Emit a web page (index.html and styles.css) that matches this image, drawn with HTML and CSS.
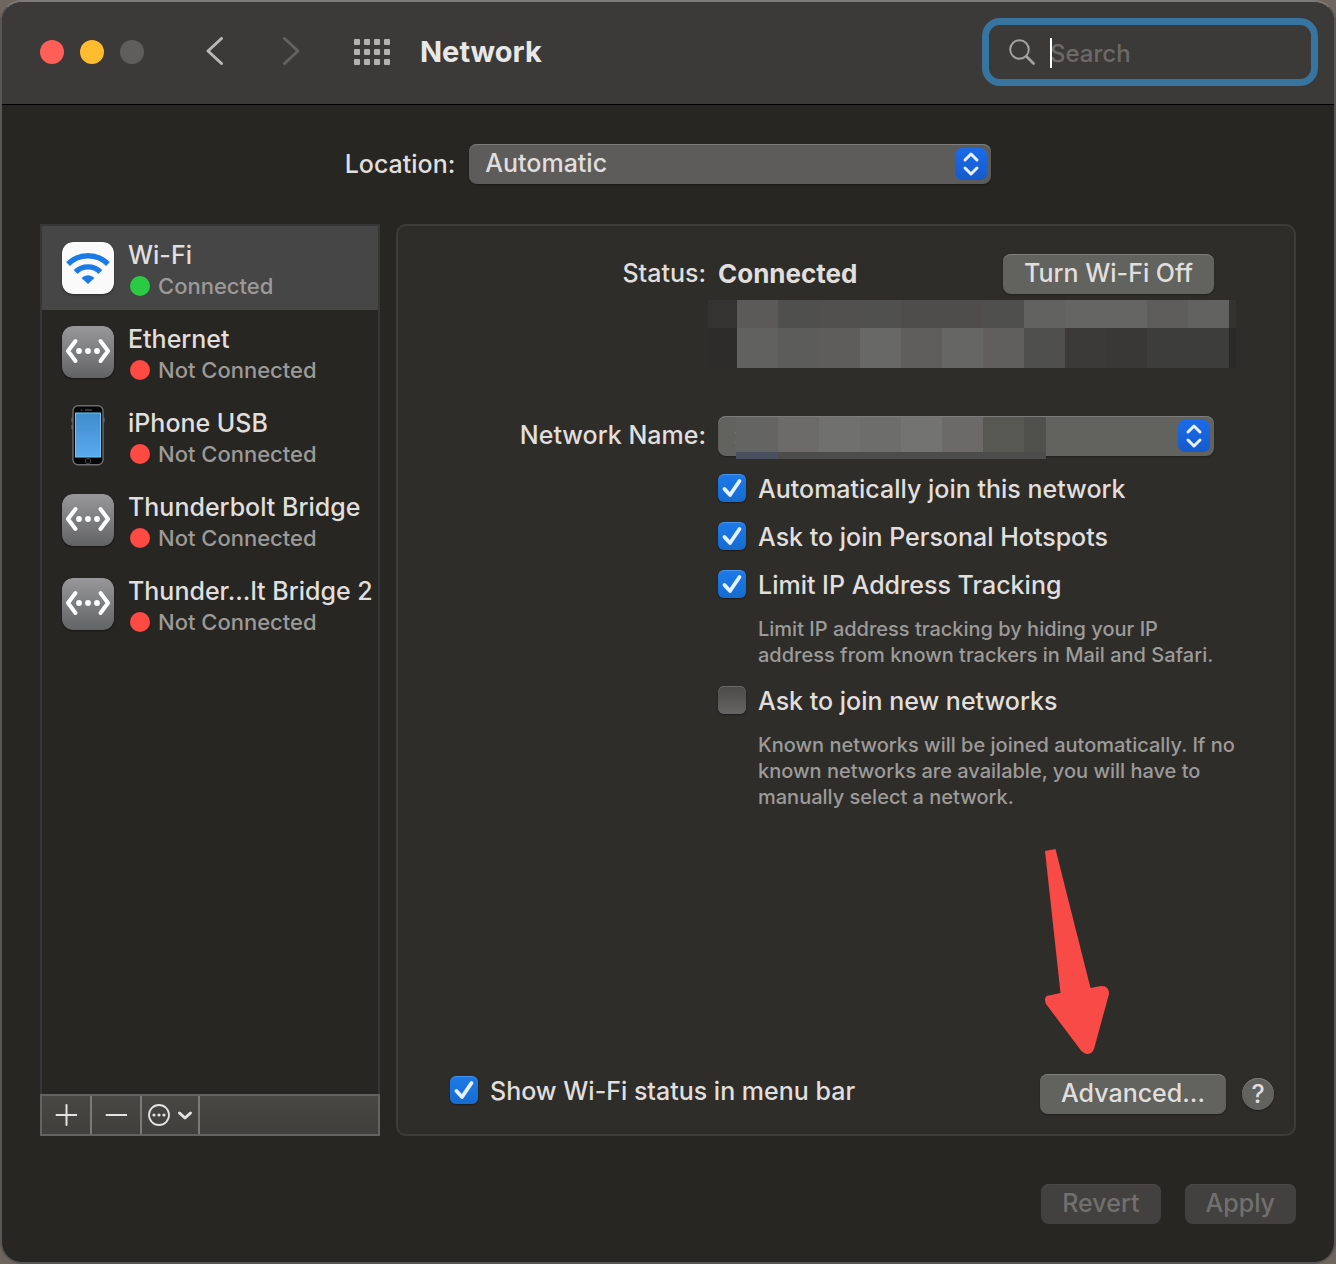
FILE: index.html
```html
<!DOCTYPE html>
<html lang="en">
  <head>
    <meta charset="utf-8">
    <title>Network</title>
    <link rel="stylesheet" href="styles.css">
  </head>
  <body>
    <!-- Shared icons -->
    <svg class="sprite" aria-hidden="true">
      <defs>
        <linearGradient id="grey" x1="0" y1="0" x2="0" y2="1">
          <stop offset="0" stop-color="#98989a"/>
          <stop offset="1" stop-color="#626365"/>
        </linearGradient>
        <linearGradient id="screen" x1="0" y1="0" x2="0" y2="1">
          <stop offset="0" stop-color="#3f8ccb"/>
          <stop offset="1" stop-color="#5aaaf0"/>
        </linearGradient>
      </defs>
      <symbol id="bridge" viewBox="0 0 52 52">
        <rect width="52" height="52" rx="11" fill="url(#grey)"/>
        <path d="M13.500 15L6 25l7.500 10M38.500 15L46 25l-7.500 10" fill="none" stroke="#fff" stroke-width="4" stroke-linecap="round" stroke-linejoin="round"/>
        <circle cx="17" cy="25" r="2.900" fill="#fff"/>
        <circle cx="26" cy="25" r="2.900" fill="#fff"/>
        <circle cx="35" cy="25" r="2.900" fill="#fff"/>
      </symbol>
      <symbol id="updown" viewBox="0 0 32 32">
        <path d="M10 12L16 6l6 6M10 20L16 26l6-6" fill="none" stroke="#e8f0ff" stroke-width="3" stroke-linecap="round" stroke-linejoin="round"/>
      </symbol>
    </svg>

    <div class="window">
      <header class="toolbar">
        <div class="lights">
          <button class="light red" aria-label="Close"></button>
          <button class="light yellow" aria-label="Minimize"></button>
          <button class="light off" aria-label="Zoom" disabled></button>
        </div>
        <div class="nav">
          <button class="nav-button" aria-label="Back">
            <svg width="20" height="30" viewBox="0 0 20 30"><path d="M16.500 1.500L3 14l13.500 12.500" fill="none" stroke="#b9b8b7" stroke-width="3" stroke-linecap="round" stroke-linejoin="round"/></svg>
          </button>
          <button class="nav-button" aria-label="Forward" disabled>
            <svg width="20" height="30" viewBox="0 0 20 30"><path d="M3.500 1.500L17 14L3.500 26.500" fill="none" stroke="#63625f" stroke-width="3" stroke-linecap="round" stroke-linejoin="round"/></svg>
          </button>
        </div>
        <button class="nav-button" aria-label="Show all">
          <svg width="36" height="26" viewBox="0 0 36 26" fill="#b3b2b1">
            <rect x="0" y="0" width="6" height="6" rx="1"/><rect x="10" y="0" width="6" height="6" rx="1"/><rect x="20" y="0" width="6" height="6" rx="1"/><rect x="30" y="0" width="6" height="6" rx="1"/>
            <rect x="0" y="10" width="6" height="6" rx="1"/><rect x="10" y="10" width="6" height="6" rx="1"/><rect x="20" y="10" width="6" height="6" rx="1"/><rect x="30" y="10" width="6" height="6" rx="1"/>
            <rect x="0" y="20" width="6" height="6" rx="1"/><rect x="10" y="20" width="6" height="6" rx="1"/><rect x="20" y="20" width="6" height="6" rx="1"/><rect x="30" y="20" width="6" height="6" rx="1"/>
          </svg>
        </button>
        <h1 class="title">Network</h1>
        <div class="search">
          <svg width="26" height="26" viewBox="0 0 26 26"><g fill="none" stroke="#a3a2a0" stroke-width="2" stroke-linecap="round"><circle cx="10.500" cy="10.500" r="9.300"/><path d="M17.500 17.500l7 7" stroke-width="2.800"/></g></svg>
          <div class="search-field">
            <span class="caret"></span>
            <input class="search-input" type="text" placeholder="Search" aria-label="Search">
          </div>
        </div>
      </header>

      <div class="content">
        <div class="location">
          <label for="location">Location:</label>
          <div class="popup location-popup">
            <select id="location"><option>Automatic</option></select>
            <svg class="popup-arrows" aria-hidden="true"><use href="#updown"/></svg>
          </div>
        </div>

        <main class="main">
          <aside class="sidebar">
            <ul class="services">
              <li class="service selected">
                <svg class="service-icon" viewBox="0 0 52 52">
                  <rect width="52" height="52" rx="11" fill="#fafafa"/>
                  <g fill="none" stroke="#1a7be4" stroke-width="5.400">
                    <path d="M6 22a28.500 28.500 0 0 1 40 0"/>
                    <path d="M13.600 30a17.500 17.500 0 0 1 24.800 0"/>
                  </g>
                  <path d="M26 42l-6.500-6a9 9 0 0 1 13 0z" fill="#1a7be4"/>
                </svg>
                <div class="service-text">
                  <div class="service-name">Wi-Fi</div>
                  <div class="service-status"><span class="dot green"></span>Connected</div>
                </div>
              </li>
              <li class="service">
                <svg class="service-icon"><use href="#bridge"/></svg>
                <div class="service-text">
                  <div class="service-name">Ethernet</div>
                  <div class="service-status"><span class="dot"></span>Not Connected</div>
                </div>
              </li>
              <li class="service">
                <svg class="service-icon phone" viewBox="0 0 52 62">
                  <rect x="11" y="0.700" width="30" height="59" rx="5" fill="#050505" stroke="#6d6d70" stroke-width="1.400"/>
                  <path d="M10 13v4M10 20v4M42 13v4" stroke="#77777a"/>
                  <rect x="13.500" y="8" width="25" height="44" fill="url(#screen)" stroke="#6cc9f5"/>
                  <path d="M23 5h7" stroke="#444" stroke-width="1.400"/>
                  <circle cx="19.500" cy="5" r="1" fill="#2d3850"/>
                  <circle cx="26" cy="56" r="2.600" fill="none" stroke="#444"/>
                </svg>
                <div class="service-text">
                  <div class="service-name">iPhone USB</div>
                  <div class="service-status"><span class="dot"></span>Not Connected</div>
                </div>
              </li>
              <li class="service">
                <svg class="service-icon"><use href="#bridge"/></svg>
                <div class="service-text">
                  <div class="service-name">Thunderbolt Bridge</div>
                  <div class="service-status"><span class="dot"></span>Not Connected</div>
                </div>
              </li>
              <li class="service">
                <svg class="service-icon"><use href="#bridge"/></svg>
                <div class="service-text">
                  <div class="service-name">Thunder...lt Bridge 2</div>
                  <div class="service-status"><span class="dot"></span>Not Connected</div>
                </div>
              </li>
            </ul>
            <div class="actions">
              <button class="action" aria-label="Add service">
                <svg width="22" height="22" viewBox="0 0 22 22"><path d="M11.500 1v20M1.500 11h20" stroke="#e4e3e2" stroke-width="2" stroke-linecap="round"/></svg>
              </button>
              <button class="action" aria-label="Remove service">
                <svg width="22" height="22" viewBox="0 0 22 22"><path d="M1.500 11h20" stroke="#e4e3e2" stroke-width="2" stroke-linecap="round"/></svg>
              </button>
              <button class="action wide" aria-label="More">
                <svg width="46" height="22" viewBox="0 0 46 22">
                  <circle cx="12" cy="11" r="10" fill="none" stroke="#e4e3e2" stroke-width="1.800"/>
                  <g fill="#e4e3e2"><circle cx="7" cy="11" r="1.600"/><circle cx="12" cy="11" r="1.600"/><circle cx="17" cy="11" r="1.600"/></g>
                  <path d="M32.500 9l5.500 5 5.500-5" fill="none" stroke="#e4e3e2" stroke-width="3" stroke-linecap="round" stroke-linejoin="round"/>
                </svg>
              </button>
            </div>
          </aside>

          <section class="panel">
            <div class="form">
              <span class="form-label">Status:</span>
              <div class="status-row">
                <strong>Connected</strong>
                <button class="button">Turn Wi-Fi Off</button>
              </div>

              <div class="mosaic-row">
                <svg class="mosaic" viewBox="0 0 528 68" preserveAspectRatio="none" shape-rendering="crispEdges" aria-hidden="true">
                  <rect x="0" y="0" width="29" height="28" fill="#343331"/>
                  <rect x="29" y="0" width="41" height="28" fill="#5b5a58"/>
                  <rect x="70" y="0" width="41" height="28" fill="#4f4f4d"/>
                  <rect x="111" y="0" width="41" height="28" fill="#51504e"/>
                  <rect x="152" y="0" width="41" height="28" fill="#50504e"/>
                  <rect x="193" y="0" width="82" height="28" fill="#4e4d4b"/>
                  <rect x="275" y="0" width="41" height="28" fill="#4f4f4d"/>
                  <rect x="316" y="0" width="41" height="28" fill="#626260"/>
                  <rect x="357" y="0" width="82" height="28" fill="#656563"/>
                  <rect x="439" y="0" width="41" height="28" fill="#5f5d5b"/>
                  <rect x="480" y="0" width="41" height="28" fill="#626260"/>
                  <rect x="521" y="0" width="7" height="28" fill="#33342f"/>
                  <rect x="0" y="28" width="29" height="40" fill="#2d2c2a"/>
                  <rect x="29" y="28" width="41" height="40" fill="#61615f"/>
                  <rect x="70" y="28" width="41" height="40" fill="#5c5c5a"/>
                  <rect x="111" y="28" width="41" height="40" fill="#5e5d5b"/>
                  <rect x="152" y="28" width="41" height="40" fill="#686866"/>
                  <rect x="193" y="28" width="41" height="40" fill="#605e5c"/>
                  <rect x="234" y="28" width="41" height="40" fill="#666664"/>
                  <rect x="275" y="28" width="41" height="40" fill="#605f5d"/>
                  <rect x="316" y="28" width="41" height="40" fill="#4f4f4d"/>
                  <rect x="357" y="28" width="41" height="40" fill="#3b3a38"/>
                  <rect x="398" y="28" width="41" height="40" fill="#393836"/>
                  <rect x="439" y="28" width="82" height="40" fill="#3d3d3b"/>
                  <rect x="521" y="28" width="7" height="40" fill="#2b2a28"/>
                </svg>
              </div>

              <label class="form-label" for="network">Network Name:</label>
              <div class="popup network-popup">
                <select id="network"><option>:</option></select>
                <svg class="network-mosaic" viewBox="0 0 310 42" shape-rendering="crispEdges" aria-hidden="true">
                  <rect x="0" y="0" width="42" height="36" fill="#646462"/>
                  <rect x="42" y="0" width="41" height="36" fill="#6c6b69"/>
                  <rect x="83" y="0" width="41" height="36" fill="#70706e"/>
                  <rect x="124" y="0" width="41" height="36" fill="#6d6d6b"/>
                  <rect x="165" y="0" width="41" height="36" fill="#737371"/>
                  <rect x="206" y="0" width="41" height="36" fill="#6b6a68"/>
                  <rect x="247" y="0" width="41" height="36" fill="#575852"/>
                  <rect x="288" y="0" width="22" height="36" fill="#50514c"/>
                  <rect x="0" y="35" width="42" height="7" fill="#4a5060"/>
                  <rect x="42" y="35" width="268" height="7" fill="#4c4c4a"/>
                </svg>
                <svg class="popup-arrows" aria-hidden="true"><use href="#updown"/></svg>
              </div>

              <div class="options">
                <label class="check"><input type="checkbox" checked><span>Automatically join this network</span></label>
                <label class="check"><input type="checkbox" checked><span>Ask to join Personal Hotspots</span></label>
                <label class="check"><input type="checkbox" checked><span>Limit IP Address Tracking</span></label>
                <p class="hint">Limit IP address tracking by hiding your IP<br>address from known trackers in Mail and Safari.</p>
                <label class="check"><input type="checkbox"><span>Ask to join new networks</span></label>
                <p class="hint">Known networks will be joined automatically. If no<br>known networks are available, you will have to<br>manually select a network.</p>
              </div>
            </div>

            <div class="panel-bottom">
              <label class="check"><input type="checkbox" checked><span>Show Wi-Fi status in menu bar</span></label>
              <div class="advanced">
                <svg class="pointer" width="66" height="208" viewBox="0 0 66 208" aria-hidden="true">
                  <path d="M1 3L11.500 1L46.500 140L57 138Q65 137.500 65 146L50 201Q47 208 40 205L37 202.500L2 156Q-1 148 5 147.500L16.500 145z" fill="#f84a46"/>
                </svg>
                <button class="button">Advanced...</button>
              </div>
              <button class="help" aria-label="Help">?</button>
            </div>
          </section>
        </main>

        <footer class="footer">
          <button class="button" disabled>Revert</button>
          <button class="button" disabled>Apply</button>
        </footer>
      </div>
    </div>
  </body>
</html>
```
FILE: styles.css
```css
* {
  box-sizing: border-box;
}

body {
  margin: 0;
  background: #6f675f;
  color: #e0dfdd;
  font-family: Inter, "Liberation Sans", sans-serif;
  font-size: 25px;
  font-weight: 450;
  line-height: 32px;
}

button, input, select {
  margin: 0;
  font: inherit;
  color: inherit;
}

.sprite {
  position: absolute;
  width: 0;
  height: 0;
}

.window {
  display: flex;
  flex-direction: column;
  min-height: 100vh;
  border: 2px solid #575654;
  border-top-color: #7b7a78;
  border-radius: 22px;
  background: #272622;
  overflow: hidden;
}

/* Toolbar */

.toolbar {
  display: flex;
  align-items: center;
  height: 103px;
  padding: 0 23px 2px 38px;
  background: #3b3a38;
  border-bottom: 1px solid #000;
}

.lights {
  display: flex;
  gap: 16px;
}

.light {
  width: 24px;
  height: 24px;
  padding: 0;
  border: 0;
  border-radius: 50%;
}

.red {
  background: #ff5f57;
}

.yellow {
  background: #febc2e;
}

.off {
  background: #5f5e5c;
}

.nav {
  display: flex;
  gap: 56px;
  margin: 0 53px 0 61px;
}

.nav-button {
  display: flex;
  padding: 0;
  border: 0;
  background: none;
}

.title {
  margin: 0 0 0 30px;
  font-size: 29px;
  font-weight: 700;
  color: #e9e8e7;
}

.search {
  display: flex;
  align-items: center;
  gap: 15px;
  width: 322px;
  height: 54px;
  margin-left: auto;
  padding: 0 20px;
  border-radius: 11px;
  box-shadow: 0 0 0 7px #3874a0;
}

.search svg {
  flex: none;
}

.search-field {
  position: relative;
  display: flex;
  flex: 1;
}

.search-input {
  width: 100%;
  padding: 3px 0 0;
  border: 0;
  outline: 0;
  background: none;
  font-size: 24px;
}

.search-input::placeholder {
  color: #6b6a68;
}

.caret {
  position: absolute;
  top: 3px;
  left: 0;
  width: 2px;
  height: 30px;
  background: #fff;
}

/* Content */

.content {
  display: flex;
  flex: 1;
  flex-direction: column;
  padding: 39px 38px 38px;
}

.location {
  display: flex;
  align-items: center;
  justify-content: center;
  gap: 14px;
  margin-bottom: 40px;
}

.popup {
  position: relative;
}

.popup select {
  display: block;
  width: 100%;
  height: 40px;
  padding: 0 44px 2px 16px;
  border: 0;
  border-radius: 8px;
  appearance: none;
  background: #5d5c5a;
  box-shadow: inset 0 1px #7d7c7a, 0 1px 2px #0005;
}

.popup-arrows {
  position: absolute;
  top: 4px;
  right: 4px;
  width: 32px;
  height: 32px;
  border-radius: 7px;
  background: linear-gradient(#1b6bea, #155acb);
  pointer-events: none;
}

.location-popup {
  width: 522px;
}

.main {
  display: flex;
  flex: 1;
  gap: 16px;
}

/* Sidebar */

.sidebar {
  display: flex;
  flex: 0 0 340px;
  flex-direction: column;
}

.services {
  flex: 1;
  margin: 0;
  padding: 0;
  border: 2px solid #373638;
  border-bottom: 0;
  list-style: none;
}

.service {
  display: flex;
  align-items: center;
  gap: 14px;
  height: 84px;
  padding-left: 20px;
  white-space: nowrap;
}

.selected {
  background: #464646;
}

.service-icon {
  flex: none;
  width: 52px;
  height: 52px;
  border-radius: 11px;
  box-shadow: 0 1px 2px #0006;
}

.phone {
  height: 62px;
  box-shadow: none;
}

.service-text {
  padding-top: 4px;
}

.service-status {
  display: flex;
  align-items: center;
  gap: 8px;
  padding-left: 2px;
  font-size: 22px;
  line-height: 30px;
  color: #9b9a98;
}

.dot {
  width: 20px;
  height: 20px;
  border-radius: 50%;
  background: #ff4943;
}

.green {
  background: #2bca44;
}

.actions {
  display: flex;
  height: 42px;
  border: 2px solid #646361;
  background: linear-gradient(#484744, #403f3c);
}

.action {
  display: flex;
  align-items: center;
  justify-content: center;
  width: 50px;
  padding: 0;
  border: 0;
  border-right: 2px solid #7b7a78;
  background: none;
}

.wide {
  width: 58px;
}

/* Wi-Fi panel */

.panel {
  display: flex;
  flex: 1;
  flex-direction: column;
  justify-content: space-between;
  padding: 28px 20px 20px 0;
  border: 2px solid #3d3c39;
  border-radius: 10px;
  background: #2e2d2a;
}

.form {
  display: grid;
  grid-template-columns: 308px 1fr;
  column-gap: 12px;
  padding-right: 38px;
}

.form-label {
  padding-top: 3px;
  text-align: right;
}

.status-row {
  display: flex;
  align-items: center;
  justify-content: space-between;
  margin-right: 22px;
}

.status-row strong {
  font-size: 26px;
}

.button {
  height: 40px;
  padding: 0 21px 2px;
  border: 0;
  border-radius: 8px;
  background: #62625e;
  box-shadow: inset 0 1px #7c7c78, 0 1px 2px #0005;
}

.button:disabled {
  background: #42413f;
  box-shadow: inset 0 1px #4b4a48;
  color: #71706e;
}

.mosaic-row {
  grid-column: 2;
  height: 68px;
  margin: 6px 0 48px -10px;
}

.mosaic {
  display: block;
  width: 100%;
  height: 68px;
}

.network-popup {
  margin-right: 22px;
}

.network-popup select {
  background: #62625e;
}

.network-mosaic {
  position: absolute;
  top: 1px;
  left: 18px;
  width: 310px;
  height: 42px;
}

.options {
  display: flex;
  flex-direction: column;
  grid-column: 2;
  gap: 16px;
  margin-top: 16px;
}

.check {
  display: flex;
  align-items: center;
  gap: 12px;
  height: 32px;
}

.check span {
  padding-top: 2px;
}

.check input {
  flex: none;
  width: 28px;
  height: 28px;
  border-radius: 6px;
  appearance: none;
  background: linear-gradient(#4b4a48, #666563);
  box-shadow: inset 0 1px #6b6a68, 0 1px 2px #0006;
}

.check input:checked {
  background: url("data:image/svg+xml,%3Csvg xmlns='http://www.w3.org/2000/svg' viewBox='0 0 28 28'%3E%3Cpath d='M6.500 15l5.500 6L21.500 7' fill='none' stroke='%23e6f0ff' stroke-width='3.800' stroke-linecap='round' stroke-linejoin='round'/%3E%3C/svg%3E"), linear-gradient(#1d7aea, #176bd0);
  box-shadow: inset 0 1px #4c97ee, 0 1px 2px #0006;
}

.hint {
  margin: 0 0 0 40px;
  font-size: 20px;
  line-height: 26px;
  color: #9c9b99;
  white-space: nowrap;
}

.panel-bottom {
  display: flex;
  align-items: flex-start;
  padding-left: 52px;
}

.advanced {
  position: relative;
  margin-left: auto;
}

/* Red arrow over the panel, pointing at the button */
.pointer {
  position: absolute;
  right: 116px;
  bottom: 58px;
}

.help {
  width: 32px;
  height: 32px;
  margin: 4px 0 0 16px;
  padding: 0;
  border: 0;
  border-radius: 50%;
  background: #62625e;
  box-shadow: inset 0 1px #7c7c78, 0 1px 2px #0005;
}

.footer {
  display: flex;
  justify-content: flex-end;
  gap: 24px;
  margin-top: 48px;
}
```
